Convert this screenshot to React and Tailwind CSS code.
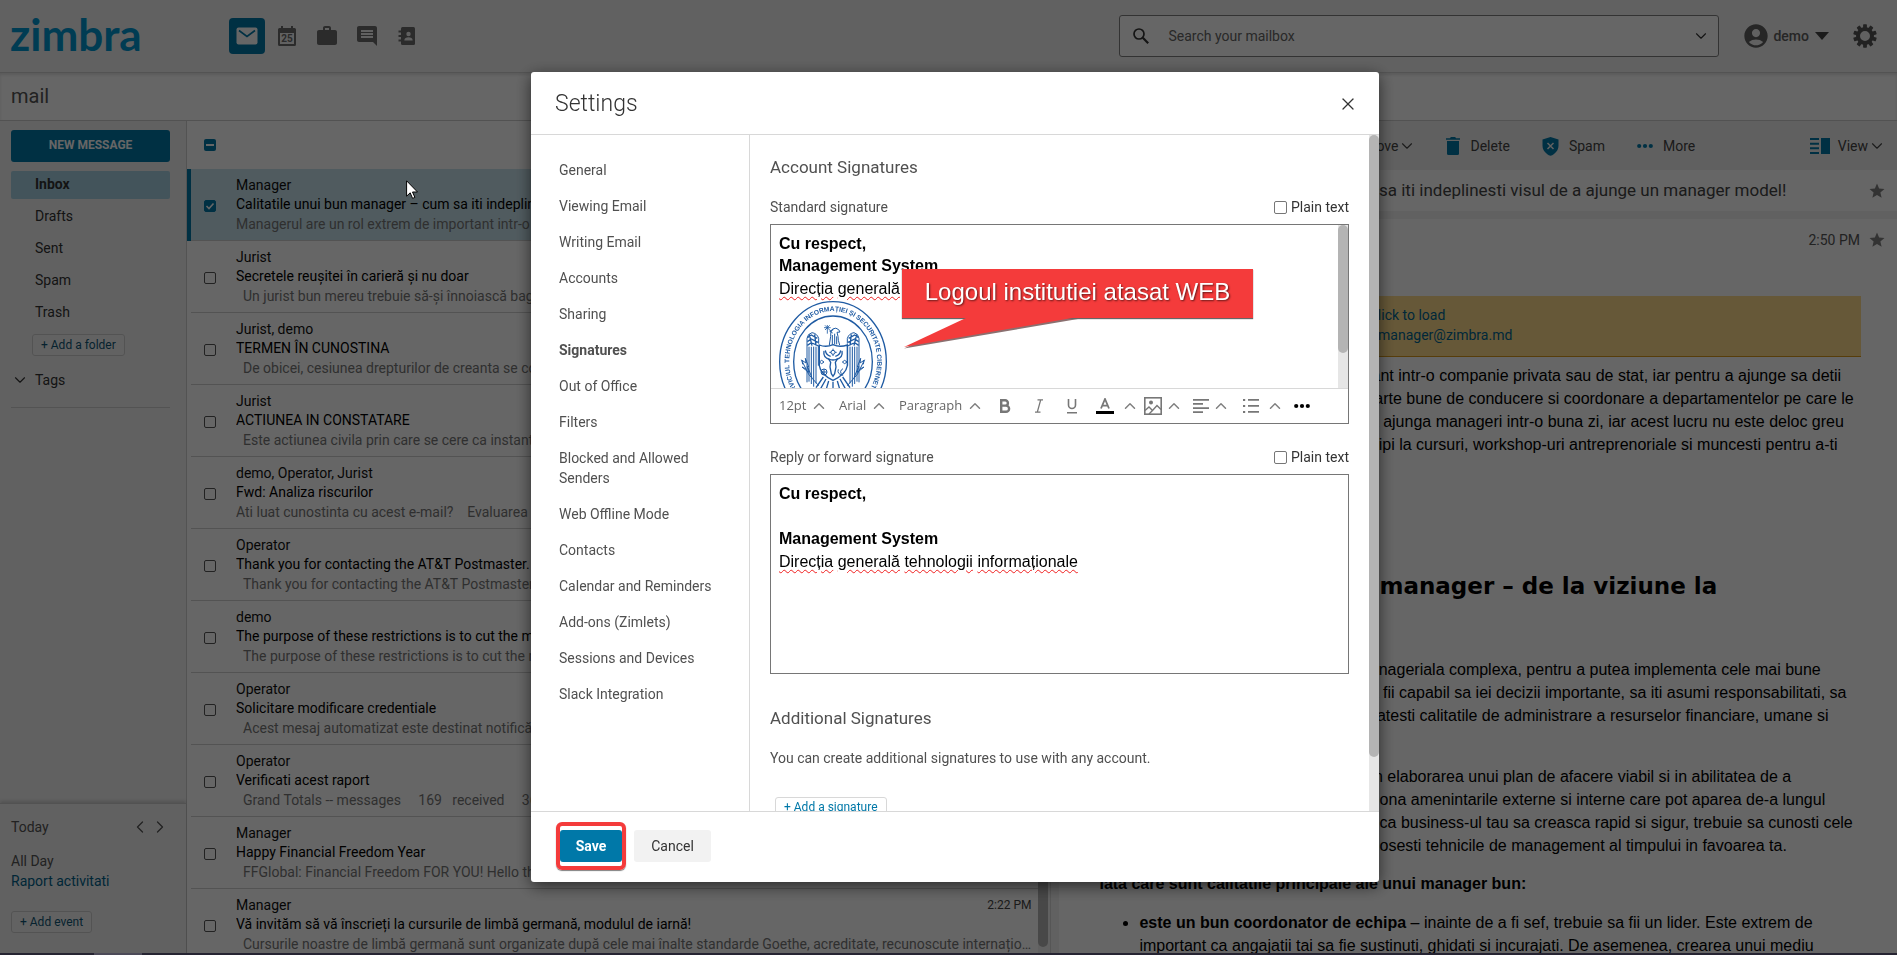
import React from "react";
import { ChevronDown, ChevronUp, ChevronLeft, ChevronRight, X } from "lucide-react";
import { MdWork, MdComment, MdStar, MdAccountCircle } from "react-icons/md";

const FOLDERS = ["Inbox", "Drafts", "Sent", "Spam", "Trash"];

const MAILS = [
  { from: "Manager", subject: "Calitatile unui bun manager – cum sa iti indeplinesti visul de a ajunge un manager model!", preview: "Managerul are un rol extrem de important intr-o companie privata sau de stat", time: "2:50 PM", selected: true },
  { from: "Jurist", subject: "Secretele reușitei în carieră și nu doar", preview: "Un jurist bun mereu trebuie să-și înnoiască bagajul de cunoștințe", time: "2:48 PM", indent: true },
  { from: "Jurist, demo", subject: "TERMEN ÎN CUNOSTINA", preview: "De obicei, cesiunea drepturilor de creanta se constata in scris", time: "2:45 PM", indent: true },
  { from: "Jurist", subject: "ACTIUNEA IN CONSTATARE", preview: "Este actiunea civila prin care se cere ca instanta sa constate", time: "2:43 PM", indent: true },
  { from: "demo, Operator, Jurist", subject: "Fwd: Analiza riscurilor", preview: "Ati luat cunostinta cu acest e-mail?\u00a0\u00a0\u00a0 Evaluarea riscurilor", time: "2:40 PM" },
  { from: "Operator", subject: "Thank you for contacting the AT&T Postmaster.", preview: "Thank you for contacting the AT&T Postmaster. We have received", time: "2:36 PM", indent: true },
  { from: "demo", subject: "The purpose of these restrictions is to cut the messages", preview: "The purpose of these restrictions is to cut the messages", time: "2:33 PM", indent: true },
  { from: "Operator", subject: "Solicitare modificare credentiale", preview: "Acest mesaj automatizat este destinat notificării utilizatorilor", time: "2:31 PM", indent: true },
  { from: "Operator", subject: "Verificati acest raport", preview: "Grand Totals -- messages\u00a0\u00a0\u00a0\u00a0 169\u00a0\u00a0 received\u00a0\u00a0\u00a0\u00a0 369\u00a0\u00a0 delivered", time: "2:28 PM", indent: true },
  { from: "Manager", subject: "Happy Financial Freedom Year", preview: "FFGlobal: Financial Freedom FOR YOU! Hello there", time: "2:25 PM", indent: true },
  { from: "Manager", subject: "Vă invităm să vă înscrieți la cursurile de limbă germană, modulul de iarnă!", preview: "Cursurile noastre de limbă germană sunt organizate după cele mai înalte standarde Goethe, acreditate, recunoscute internațional", time: "2:22 PM", indent: true },
];

const SECTIONS = [
  "General", "Viewing Email", "Writing Email", "Accounts", "Sharing", "Signatures", "Out of Office", "Filters",
  "Blocked and Allowed Senders", "Web Offline Mode", "Contacts", "Calendar and Reminders", "Add-ons (Zimlets)",
  "Sessions and Devices", "Slack Integration",
];

const PARA_ONE = [
  "Managerul are un rol extrem de important intr-o companie privata sau de stat, iar pentru a ajunge sa detii",
  "acest rol este nevoie de competente foarte bune de conducere si coordonare a departamentelor pe care le",
  "coordonezi. Multi oameni viseaza ca sa ajunga manageri intr-o buna zi, iar acest lucru nu este deloc greu",
  "atunci cand inveti, exersezi, daca participi la cursuri, workshop-uri antreprenoriale si muncesti pentru a-ti",
];
const PARA_TWO = [
  "Managerul trebuie sa aiba o viziune manageriala complexa, pentru a putea implementa cele mai bune",
  "practici. Este foarte important mereu sa fii capabil sa iei decizii importante, sa iti asumi responsabilitati, sa",
  "comunici bine si sa iti mai bine imbunatatesti calitatile de administrare a resurselor financiare, umane si",
];
const PARA_THREE = [
  "Viziunea unui manager se reflecta azi in elaborarea unui plan de afacere viabil si in abilitatea de a",
  "si a vedea si a intelege mereu si a gestiona amenintarile externe si interne care pot aparea de-a lungul",
  "drumului. Asadar, pentru a te reasigura ca business-ul tau sa creasca rapid si sigur, trebuie sa cunosti cele",
  "mai eficiente strategii si mereu ca sa folosesti tehnicile de management al timpului in favoarea ta.",
];

function Lines({ lines, className }) {
  return (
    <p className={className}>
      {lines.map((line) => (
        <span key={line} className="block whitespace-nowrap">{line}</span>
      ))}
    </p>
  );
}

function MailIcon() {
  return (
    <svg viewBox="0 0 22 18" className="h-[18px] w-[22px]" aria-hidden="true">
      <rect x="0.5" y="0.5" width="21" height="17" rx="2" fill="#fff" />
      <path d="M3 3.5l8 6 8-6" fill="none" stroke="#0078a8" strokeWidth="1.6" />
    </svg>
  );
}

function CalendarIcon() {
  return (
    <svg viewBox="0 0 18 20" className="h-5 w-[18px]" aria-hidden="true">
      <path fillRule="evenodd" fill="currentColor" d="M3 0h2v2h8V0h2v2h1.500A1.500 1.500 0 0 1 18 3.500v15A1.500 1.500 0 0 1 16.500 20h-15A1.500 1.500 0 0 1 0 18.500v-15A1.500 1.500 0 0 1 1.500 2H3zM2 7v11h14V7z" />
      <text x="9" y="16" textAnchor="middle" fontSize="10" fontWeight="700" fontFamily="Roboto, sans-serif" fill="currentColor">25</text>
    </svg>
  );
}

function ContactsIcon() {
  return (
    <svg viewBox="0 0 18 20" className="h-5 w-[18px]" aria-hidden="true">
      <rect x="3" y="1" width="14" height="18" rx="1.5" fill="currentColor" />
      <path d="M0.5 5.5h4M0.5 10h4M0.5 14.5h4" stroke="currentColor" strokeWidth="2" />
      <circle cx="10.5" cy="8" r="2.2" fill="#f2f2f2" />
      <path d="M6.300 14.500c0-2.200 2-3.300 4.200-3.300s4.200 1.100 4.200 3.300z" fill="#f2f2f2" />
    </svg>
  );
}

function SearchIcon() {
  return (
    <svg viewBox="0 0 18 18" className="size-[18px]" fill="none" stroke="currentColor" aria-hidden="true">
      <circle cx="7" cy="7" r="5" strokeWidth="1.7" />
      <path d="M10.800 10.800l5.400 5.400" strokeWidth="2.2" />
    </svg>
  );
}

function GearIcon() {
  return (
    <svg viewBox="-12 -12 24 24" className="size-6" aria-hidden="true">
      <circle r="7" fill="none" stroke="currentColor" strokeWidth="4" />
      {[0, 36, 72, 108, 144, 180, 216, 252, 288, 324].map((angle) => (
        <rect key={angle} x="-1.9" y="-11.8" width="3.8" height="4.5" rx="0.7" fill="currentColor" transform={`rotate(${angle})`} />
      ))}
    </svg>
  );
}

function TrashIcon() {
  return (
    <svg viewBox="0 0 14 18" className="h-[18px] w-3.5 shrink-0" fill="currentColor" aria-hidden="true">
      <path d="M0 1.200h4L4.800 0h4.400l.8 1.200h4v1.600H0z" />
      <path d="M1 4h12v12.500A1.500 1.500 0 0 1 11.500 18h-9A1.500 1.500 0 0 1 1 16.500z" />
    </svg>
  );
}

function ShieldIcon() {
  return (
    <svg viewBox="0 0 17 19" className="h-[19px] w-[17px] shrink-0" aria-hidden="true">
      <path d="M8.500 0l8 2.600v5.800c0 4.800-3.400 8.600-8 10.400C3.900 17 .5 13.200.5 8.400V2.600z" fill="currentColor" />
      <path d="M5.500 6l6 6M11.500 6l-6 6" stroke="#f2f2f2" strokeWidth="1.5" />
    </svg>
  );
}

function DotsIcon({ className }) {
  return (
    <svg viewBox="0 0 16 6" className={className} fill="currentColor" aria-hidden="true">
      <circle cx="2.2" cy="3" r="2.1" />
      <circle cx="8" cy="3" r="2.1" />
      <circle cx="13.8" cy="3" r="2.1" />
    </svg>
  );
}

function ViewIcon() {
  return (
    <svg viewBox="0 0 20 16" className="h-4 w-5 shrink-0" fill="currentColor" aria-hidden="true">
      <path d="M0 0h9v2H0zM0 4.700h9v2H0zM0 9.300h9v2H0zM0 14h9v2H0zM11 0h9v16h-9z" />
    </svg>
  );
}

function Seal() {
  return (
    <svg viewBox="27 18 324 363" className="h-[121px] w-[108px] shrink-0" role="img" aria-label="Sigla instituției" fill="none" stroke="#1f5ba3" strokeWidth="3">
      <defs>
        <path id="seal-ring" d="M189 350a132 151 0 1 1 1 0" />
      </defs>
      <ellipse cx="189" cy="200" rx="160" ry="180" strokeWidth="4" />
      <ellipse cx="189" cy="200" rx="118" ry="137" strokeWidth="4" />
      <text fontFamily="'Liberation Sans', Arial, sans-serif" fontWeight="700" fontSize="20" fill="#1f5ba3" stroke="none" textAnchor="middle">
        <textPath href="#seal-ring" startOffset="50%">SERVICIUL TEHNOLOGIA INFORMAȚIEI ȘI SECURITATE CIBERNETICĂ</textPath>
      </text>
      {/* wings */}
      <path d="M111 262V130q2-14 15-17 15 2 20 17v16M117 155v105M124 155v112M131 155v120M138 155v110M145 152v60" />
      <path d="M267 262V130q-2-14-15-17-15 2-20 17v16M261 155v105M254 155v112M247 155v120M240 155v110M233 152v60" />
      <path d="M112 128l12-8 18 10M112 140l12-8 20 10M112 151l12-8 22 10M118 118l8 34M134 118l4 34" strokeWidth="4" />
      <path d="M266 128l-12-8-18 10M266 140l-12-8-20 10M266 151l-12-8-22 10M260 118l-8 34M244 118l-4 34" strokeWidth="4" />
      {/* head and cross */}
      <path d="M178 150l4-26q-2-14 6-22 10-6 18 2l4 7-9 1q4 12 4 24l4 14M187 120v28M194 116v32M200 124v24" />
      <path d="M190 104l-11 4 9 6" />
      <path d="M172 90v26M162 98h20M165 91l14 14M179 91l-14 14" strokeWidth="2.5" />
      {/* shield */}
      <path d="M148 150q20 8 41-1 21 9 43 1v62q-4 26-43 44-38-18-41-44z" strokeWidth="4" />
      <path d="M162 168q-4 20 18 26M216 168q4 20-18 26M166 166q2 14 16 18M212 166q-2 14-16 18" strokeWidth="4" />
      <path d="M176 192l6 10-2 14 4 20 5 8 5-8 4-20-2-14 6-10q-13 6-26 0z" strokeWidth="4" />
      <circle cx="189" cy="172" r="6" />
      <path d="M189 161v5M189 178v5M178 172h5M195 172h5" />
      <circle cx="162" cy="231" r="9" />
      <path d="M162 222v18M153 231h18M219 221q-14 8-1 20-18-4-13-18M155 206l-7-5 7-5 7 5zM224 206l-7-5 7-5 7 5z" />
      {/* branches, legs and tail */}
      <path d="M94 194l22 44 30 34M98 208l-2-12 12 8-2-14 10 26M108 222l-12-6 20 16-4-18 14 34M284 194l-22 44-30 34M280 208l2-12-12 8 2-14-10 26M270 222l12-6-20 16 4-18-14 34" />
      <path d="M160 246l-22 32M168 252l-20 36M176 258l-10 34M189 260v40M202 258l10 34M210 252l20 36M218 246l22 32" strokeWidth="4" />
    </svg>
  );
}

function Header() {
  const iconButton = "flex size-9 items-center justify-center rounded-sm text-[#6b6b6b]";
  return (
    <header className="flex h-[73px] shrink-0 items-center border-b border-[#d0d0d0] bg-[#f2f2f2] pr-5 pb-px pl-2.5">
      <a href="#home" className="w-[219px] pb-1 font-['Lato',sans-serif] text-[44px] leading-[52px] font-bold text-[#0096d0]">zimbra</a>
      <nav aria-label="Apps" className="flex items-center gap-1">
        <button aria-label="Mail" className="flex size-9 items-center justify-center rounded-sm bg-[#0078a8]"><MailIcon /></button>
        <button aria-label="Calendar" className={iconButton}><CalendarIcon /></button>
        <button aria-label="Briefcase" className={iconButton}><MdWork size={24} /></button>
        <button aria-label="Chat" className={iconButton}><MdComment size={24} /></button>
        <button aria-label="Contacts" className={iconButton}><ContactsIcon /></button>
      </nav>
      <div className="ml-auto flex items-center">
        <div className="flex h-[42px] w-[600px] items-center rounded-[3px] border border-[#808080] bg-white pr-2 pl-3 text-[#333]">
          <SearchIcon />
          <input type="search" aria-label="Search your mailbox" placeholder="Search your mailbox" className="ml-[18px] min-w-0 flex-1 bg-transparent text-sm placeholder:text-[#666]" />
          <button aria-label="Search options"><ChevronDown size={18} strokeWidth={1.5} /></button>
        </div>
        <button className="ml-[23px] flex items-center gap-[3px] text-sm font-medium text-[#606060]">
          <MdAccountCircle size={28} className="text-[#606060]" />
          demo
          <svg viewBox="0 0 14 8" className="ml-[3px] h-2 w-3.5" aria-hidden="true"><path d="M0 0h14L7 8z" fill="#444" /></svg>
        </button>
        <button aria-label="Settings" className="ml-6 text-[#555]"><GearIcon /></button>
      </div>
    </header>
  );
}

function Sidebar() {
  return (
    <aside className="flex w-[187px] shrink-0 flex-col border-r border-[#d0d0d0] bg-[#f2f2f2] text-sm text-[#333]">
      <div className="flex-1 px-[11px] pt-[9px]">
        <div className="pr-[5px]">
          <button className="h-8 w-full rounded-[3px] bg-[#0078a8] pb-0.5 text-xs font-bold text-white">NEW MESSAGE</button>
          <ul className="mt-[9px] flex flex-col gap-1">
            {FOLDERS.map((name, i) => (
              <li key={name}>
                <a href="#folder" className={i === 0 ? "block h-7 rounded-xs bg-[#a8d2e4] pl-6 leading-[26px] font-bold" : "block h-7 pl-6 leading-[26px]"}>{name}</a>
              </li>
            ))}
          </ul>
          <button className="mt-[7px] ml-[21px] h-[22px] rounded-[3px] border border-[#d0d0d0] bg-[#f6f6f6] px-2 text-xs leading-5 text-[#0f5575]">+ Add a folder</button>
          <div className="mt-3.5 flex h-[38px] items-start gap-1.5 border-b border-[#d0d0d0]">
            <ChevronDown size={18} strokeWidth={1.5} className="mt-px" />
            <span className="leading-5">Tags</span>
          </div>
        </div>
      </div>
      <section className="h-[152px] border-t border-[#cccccc] px-[11px] pt-[13px] text-[#555] shadow-[0_-2px_3px_rgba(0,0,0,0.15)]">
        <div className="flex items-center pr-[5px] leading-5">
          <h2 className="flex-1">Today</h2>
          <button aria-label="Previous day"><ChevronLeft size={20} strokeWidth={1.5} /></button>
          <button aria-label="Next day"><ChevronRight size={20} strokeWidth={1.5} /></button>
        </div>
        <p className="mt-3.5 leading-5">All Day</p>
        <a href="#event" className="block leading-5 text-[#00618a]">Raport activitati</a>
        <button className="mt-5 h-[22px] rounded-[3px] border border-[#d0d0d0] bg-[#f6f6f6] px-2 text-xs leading-5 text-[#0f5575]">+ Add event</button>
      </section>
    </aside>
  );
}

function MailList() {
  return (
    <section aria-label="Messages" className="flex min-w-0 flex-[868_1_0%] border-r border-[#d8d8d8] bg-white">
      <div className="min-w-0 flex-1">
        <div className="flex h-12 items-center pl-[17px]">
          <button aria-label="Clear selection" className="flex size-3 items-center justify-center rounded-xs bg-[#0078a8]">
            <span className="h-0.5 w-2 bg-white" />
          </button>
        </div>
        <ul className="text-sm">
          {MAILS.map((mail, i) => (
            <li key={i} className={mail.selected ? "border-l-4 border-[#0078a8] bg-[#c9e4ee]" : "border-l-4 border-transparent"}>
              <label className="flex h-[72px] items-start border-b border-[#cfcfcf] pt-[7px] pl-[13px]">
                <span className="relative mt-6 mr-5 flex size-3 shrink-0">
                  <input type="checkbox" defaultChecked={mail.selected} className="size-3 appearance-none rounded-xs border border-[#555] checked:border-[#0078a8] checked:bg-[#0078a8]" />
                  {mail.selected && (
                    <svg viewBox="0 0 12 12" className="pointer-events-none absolute inset-0 size-3" aria-hidden="true"><path d="M2.500 6l2.500 2.500L9.500 3.500" fill="none" stroke="#fff" strokeWidth="1.6" /></svg>
                  )}
                </span>
                <span className="min-w-0 flex-1 pr-[7px] leading-[19px]">
                  <span className="flex justify-between text-[#111]">
                    <span>{mail.from}</span>
                    <span className="text-xs/[19px] text-[#444]">{mail.time}</span>
                  </span>
                  <span className="block truncate text-black">{mail.subject}</span>
                  <span className={mail.indent ? "block truncate pl-[7px] leading-5 text-[#777]" : "block truncate leading-5 text-[#777]"}>{mail.preview}</span>
                </span>
              </label>
            </li>
          ))}
        </ul>
      </div>
      <div className="flex w-3 flex-col bg-[#f2f2f2]">
        <div className="h-[99%] w-2.5 rounded-full bg-[#b4b4b4]" />
      </div>
    </section>
  );
}

function Reader() {
  const action = "flex items-center gap-2.5";
  return (
    <section aria-label="Message" className="flex min-w-0 flex-[842_1_0%] flex-col bg-[#f2f2f2] pl-2 text-[#444]">
      <div className="flex h-[49px] shrink-0 items-center bg-[#f0f0f0] pt-px pr-[11px] text-sm text-[#444]">
        <div className="flex w-[357px] justify-end">
          <button className="flex items-center">Move <ChevronDown size={18} strokeWidth={1.5} /></button>
        </div>
        <button className={`${action} ml-[30px]`}><span className="text-[#0078a8]"><TrashIcon /></span>Delete</button>
        <button className={`${action} ml-8`}><span className="text-[#0078a8]"><ShieldIcon /></span>Spam</button>
        <button className={`${action} ml-8`}><DotsIcon className="w-4 text-[#0078a8]" />More</button>
        <button className="ml-auto flex items-center gap-2"><span className="text-[#0078a8]"><ViewIcon /></span><span className="flex items-center">View <ChevronDown size={18} strokeWidth={1.5} /></span></button>
      </div>
      <div className="flex h-[41px] shrink-0 items-center justify-between bg-white pr-[11px] pl-14">
        <h1 className="truncate text-[17px]">Calitatile unui bun manager – cum sa iti indeplinesti visul de a ajunge un manager model!</h1>
        <MdStar size={18} className="text-[#808080]" />
      </div>
      <article className="mt-2 min-h-0 flex-1 overflow-hidden bg-white">
        <div className="flex h-[77px] items-start justify-end gap-2 pt-2.5 pr-[11px] text-sm leading-[22px] text-[#555]">
          <time>2:50 PM</time>
          <MdStar size={18} className="mt-0.5 text-[#808080]" />
        </div>
        <div className="pr-9 pl-10">
          <div className="flex h-[61px] flex-col border-b border-[#d99a1a] bg-[#ffdc8c] pt-[9px] pl-[87px] text-sm leading-5 text-[#006490]">
            <a href="#load">External images are blocked. Click to load</a>
            <a href="#trust" className="pl-[108px]">Always trust: manager@zimbra.md</a>
          </div>
          <div className="pt-[7px] font-['Liberation_Sans',Arial,sans-serif] text-base leading-[23px] text-black">
            <Lines lines={PARA_ONE} />
            <h2 className="mt-[114px] font-['Arial_Black','DejaVu_Sans',sans-serif] text-[23px] leading-8 font-bold whitespace-nowrap">1. Calitatile unui bun manager – de la viziune la</h2>
            <Lines lines={PARA_TWO} className="mt-14" />
            <Lines lines={PARA_THREE} className="mt-[38px]" />
            <p className="mt-[15px] font-bold whitespace-nowrap">Iata care sunt calitatile principale ale unui manager bun:</p>
            <ul className="mt-4 list-disc pl-10">
              <li>
                <span className="block whitespace-nowrap"><b>este un bun coordonator de echipa</b> – inainte de a fi sef, trebuie sa fii un lider. Este extrem de</span>
                <span className="block whitespace-nowrap">important ca angajatii tai sa fie sustinuti, ghidati si incurajati. De asemenea, crearea unui mediu</span>
              </li>
            </ul>
          </div>
        </div>
      </article>
    </section>
  );
}

function Wavy({ children }) {
  return <span className="underline decoration-[#f02020] decoration-wavy decoration-1 underline-offset-2">{children}</span>;
}

function Department() {
  return (
    <p className="leading-6">
      <Wavy>Direcția</Wavy> <Wavy>generală</Wavy> <Wavy>tehnologii</Wavy> <Wavy>informaționale</Wavy>
    </p>
  );
}

function FieldHead({ id, children }) {
  return (
    <div className="flex h-[34px] items-center justify-between text-sm">
      <span id={id}>{children}</span>
      <label className="flex items-center gap-1 text-[#333]">
        <input type="checkbox" className="size-[13px] appearance-none rounded-[2px] border border-[#767676] bg-white" />
        Plain text
      </label>
    </div>
  );
}

function Caret() {
  return <ChevronUp size={18} strokeWidth={2} className="text-[#808080]" />;
}

function ToolbarSelect({ label, value }) {
  return (
    <label className="flex items-center gap-[3px]">
      <select aria-label={label} className="appearance-none bg-transparent">
        <option>{value}</option>
      </select>
      <Caret />
    </label>
  );
}

function EditorToolbar() {
  return (
    <div className="flex h-[35px] items-center gap-[11px] border-t border-[#d8d8d8] pr-[38px] pl-2 font-['Open_Sans',sans-serif] text-[13px] text-[#666]">
      <ToolbarSelect label="Font size" value="12pt" />
      <ToolbarSelect label="Font" value="Arial" />
      <ToolbarSelect label="Block format" value="Paragraph" />
      <div className="flex flex-1 items-center justify-between text-[#777]">
        <button aria-label="Bold" className="w-5">
          <svg viewBox="0 0 12 14" className="mx-auto h-3.5 w-3" fill="none" stroke="currentColor" strokeWidth="2.4" aria-hidden="true"><path d="M2.200 1.200h4a2.700 2.700 0 0 1 0 5.400h-4zM2.200 6.600h4.800a3.100 3.100 0 0 1 0 6.200H2.200z" /></svg>
        </button>
        <button aria-label="Italic" className="w-5">
          <svg viewBox="0 0 12 14" className="mx-auto h-3.5 w-3" fill="none" stroke="currentColor" strokeWidth="1.3" aria-hidden="true"><path d="M4.500 .8h5.500M2 13.200h5.500M7.700 .8L4.300 13.200" /></svg>
        </button>
        <button aria-label="Underline" className="w-5">
          <svg viewBox="0 0 12 15" className="mx-auto h-[15px] w-3" fill="none" stroke="currentColor" strokeWidth="1.6" aria-hidden="true"><path d="M2.500 0v6a3.500 3.500 0 0 0 7 0V0M1 13.800h10" /></svg>
        </button>
        <div className="flex items-center gap-[7px]">
          <button aria-label="Text color">
            <svg viewBox="0 0 18 16" className="h-4 w-[18px]" fill="none" aria-hidden="true"><path d="M5 10.500L9 1l4 9.500M6.400 7.600h5.200" stroke="currentColor" strokeWidth="1.8" /><path d="M0 13h18v3H0z" fill="#000" /></svg>
          </button>
          <button aria-label="Choose text color"><Caret /></button>
        </div>
        <div className="-ml-2 flex items-center gap-[3px]">
          <button aria-label="Insert image">
            <svg viewBox="0 0 18 18" className="size-[18px]" fill="none" stroke="currentColor" strokeWidth="1.6" aria-hidden="true"><rect x="0.8" y="0.8" width="16.4" height="16.4" /><circle cx="7" cy="5.500" r="1.2" fill="currentColor" /><path d="M1 13.500l4-3.500 3.500 3.500L13 8.500l4 4M5 17l3.500-3.500" strokeWidth="1.4" /></svg>
          </button>
          <button aria-label="Image options"><Caret /></button>
        </div>
        <div className="-ml-1 flex items-center gap-[3px]">
          <button aria-label="Align">
            <svg viewBox="0 0 16 14" className="h-3.5 w-4" fill="currentColor" aria-hidden="true"><path d="M0 0h16v1.700H0zM0 4.100h10v1.700H0zM0 8.200h16v1.700H0zM0 12.300h10V14H0z" /></svg>
          </button>
          <button aria-label="Align options"><Caret /></button>
        </div>
        <div className="flex items-center gap-[7px]">
          <button aria-label="List">
            <svg viewBox="0 0 16 14" className="h-3.5 w-4" fill="currentColor" aria-hidden="true"><path d="M0 0h2.200v2H0zM5 0h11v1.800H5zM0 6h2.200v2H0zM5 6h11v1.800H5zM0 12h2.200v2H0zM5 12h11v1.800H5z" /></svg>
          </button>
          <button aria-label="List options"><Caret /></button>
        </div>
        <button aria-label="More formatting" className="-ml-1"><DotsIcon className="w-4 text-black" /></button>
      </div>
    </div>
  );
}

function Callout() {
  return (
    <div className="absolute top-11 left-[131px] flex h-[49px] w-[351px] justify-center bg-[#f43b3b] font-['Liberation_Sans',Arial,sans-serif] text-2xl leading-[46px] whitespace-nowrap text-white shadow-[0_1px_1px_rgba(0,0,0,0.6)]">
      <span className="[text-shadow:1px_1px_2px_rgba(0,0,0,0.6)]">Logoul institutiei atasat WEB</span>
      <svg viewBox="0 0 180 32" className="absolute top-[48px] left-0 h-8 w-[180px]" aria-hidden="true">
        <path d="M66 2L2 31.500L176 2z" fill="#8a7070" />
        <path d="M66 0L2 30L176 0z" fill="#f43b3b" />
      </svg>
    </div>
  );
}

function SettingsDialog() {
  const editorText = "px-2 pt-2 font-['Liberation_Sans',Arial,sans-serif] text-base leading-[22px] text-black";
  return (
    <div role="dialog" aria-label="Settings" className="flex w-[848px] max-w-full flex-col rounded-[3px] bg-white text-[#505050] shadow-[0_4px_16px_rgba(0,0,0,0.6)]">
      <div className="flex h-[63px] shrink-0 items-center justify-between border-b border-[#d8d8d8] pt-0.5 pr-[21px] pl-6">
        <h2 className="text-[23px] font-light text-[#333]">Settings</h2>
        <button aria-label="Close" className="text-[#333]"><X size={20} strokeWidth={1.5} /></button>
      </div>
      <div className="flex min-h-0 flex-1">
        <nav aria-label="Settings sections" className="w-[219px] shrink-0 border-r border-[#d8d8d8] pt-[17px] pr-8 pl-7 text-sm leading-5">
          {SECTIONS.map((name) => (
            <a key={name} href="#section" className={name === "Signatures" ? "block py-2 font-bold" : "block py-2"}>{name}</a>
          ))}
        </nav>
        <div className="min-w-0 flex-1 overflow-hidden pt-5 pr-5 pl-5">
          <h3 className="text-[17px] leading-6">Account Signatures</h3>
          <div className="mt-[11px]">
            <FieldHead id="standard-label">Standard signature</FieldHead>
            <div className="relative h-[200px] border border-[#767676]">
              <div className="flex h-[163px] overflow-hidden">
                <div role="textbox" aria-labelledby="standard-label" className={`${editorText} flex-1`}>
                  <p className="font-bold">Cu respect,</p>
                  <p className="font-bold">Management System</p>
                  <Department />
                  <Seal />
                </div>
                <div className="w-2.5 bg-[#e6e6e6]"><div className="h-[128px] w-full rounded-full bg-[#b4b4b4]" /></div>
              </div>
              <EditorToolbar />
              <Callout />
            </div>
          </div>
          <div className="mt-4">
            <FieldHead id="reply-label">Reply or forward signature</FieldHead>
            <div role="textbox" aria-labelledby="reply-label" className={`${editorText} h-[200px] border border-[#767676]`}>
              <p className="font-bold">Cu respect,</p>
              <p className="h-[23px]"><br /></p>
              <p className="font-bold">Management System</p>
              <Department />
            </div>
          </div>
          <h3 className="mt-8 text-[17px] leading-6">Additional Signatures</h3>
          <p className="mt-[18px] text-sm leading-5">You can create additional signatures to use with any account.</p>
          <button className="mt-[29px] ml-[5px] h-6 rounded-[3px] border border-[#d8d8d8] px-2 pb-1 text-xs text-[#0078a8]">+ Add a signature</button>
        </div>
        <div className="w-2.5 shrink-0 bg-[#e6e6e6]"><div className="h-[92%] w-full rounded-full bg-[#b4b4b4]" /></div>
      </div>
      <div className="flex h-[71px] shrink-0 items-center gap-2 border-t border-[#d8d8d8] pb-0.5 pl-[25px] text-sm">
        <div className="rounded-md border-4 border-[#f43b3b] py-1 shadow-[0_1px_1px_rgba(0,0,0,0.5)]">
          <button className="h-8 w-[62px] rounded-[3px] bg-[#0078a8] font-bold text-white">Save</button>
        </div>
        <button className="h-8 w-[77px] rounded-[3px] bg-[#f2f2f2] text-[#333]">Cancel</button>
      </div>
    </div>
  );
}

export default function App() {
  return (
    <div className="flex h-screen flex-col overflow-hidden bg-white font-['Roboto',sans-serif]">
      <Header />
      <div className="flex h-12 shrink-0 items-center border-b border-[#cccccc] px-[11px] pb-px text-xl text-[#555] shadow-[inset_0_2px_3px_rgba(0,0,0,0.12)]">mail</div>
      <main className="flex min-h-0 flex-1">
        <Sidebar />
        <MailList />
        <Reader />
      </main>
      <div className="fixed inset-0 flex justify-center bg-black/60 pt-[72px] pb-[73px] pl-[13px]">
        <SettingsDialog />
      </div>
      <div className="fixed inset-x-0 bottom-0 h-0.5 bg-[#262432] pl-[94px]">
        <div className="h-full w-12 bg-[#4c4a58]" />
      </div>
      <svg viewBox="0 0 12 19" className="fixed top-[180px] left-[406px] h-[19px] w-3" aria-hidden="true">
        <path d="M.6.8v15.400l3.600-3.400 2.400 5.600 2.300-1-2.400-5.400h5z" fill="#fff" stroke="#000" strokeWidth="1" />
      </svg>
    </div>
  );
}
